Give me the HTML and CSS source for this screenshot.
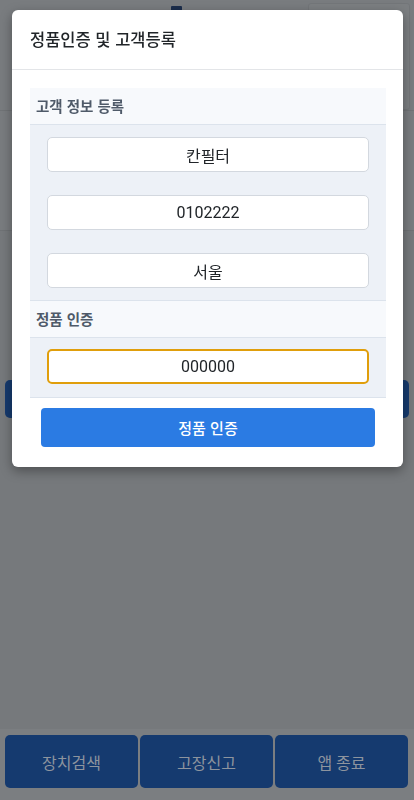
FILE: index.html
```html
<!DOCTYPE html>
<html lang="ko">
<head>
<meta charset="utf-8">
<title>정품인증 및 고객등록</title>
<link rel="stylesheet" href="styles.css">
</head>
<body>
<div class="page">
  <main class="main">
    <div class="top-card">
      <div class="top-row">
        <span class="top-icon"></span>
        <div class="top-box"></div>
      </div>
      <div class="top-row2"></div>
    </div>
    <div class="bg-bar"></div>
  </main>
  <footer class="footer">
    <button class="foot-btn">장치검색</button>
    <button class="foot-btn">고장신고</button>
    <button class="foot-btn">앱 종료</button>
  </footer>
</div>

<div class="modal">
  <div class="modal-header">정품인증 및 고객등록</div>
  <div class="modal-body">
    <div class="panel">
      <div class="panel-title">고객 정보 등록</div>
      <div class="panel-content">
        <input class="field" type="text" value="칸필터">
        <input class="field" type="text" value="0102222">
        <input class="field" type="text" value="서울">
      </div>
      <div class="panel-title panel-title-2">정품 인증</div>
      <div class="panel-content panel-content-2">
        <input class="field field-active" type="text" value="000000">
      </div>
    </div>
    <button class="submit">정품 인증</button>
  </div>
</div>
</body>
</html>
```

FILE: styles.css
```css
* { box-sizing: border-box; }
html, body { margin: 0; padding: 0; }
body {
  width: 414px;
  height: 800px;
  background: #76797c;
  font-family: Roboto, "Noto Sans CJK KR", sans-serif;
  overflow: hidden;
}
.page {
  height: 800px;
  display: flex;
  flex-direction: column;
}
.main {
  flex: 1;
  display: flex;
  flex-direction: column;
}
.top-card {
  height: 231px;
  border-bottom: 1px solid #6f7275;
  background: #797c7f;
  display: flex;
  flex-direction: column;
}
.top-row {
  height: 111px;
  border-bottom: 1px solid #707376;
  display: flex;
  justify-content: space-between;
  align-items: flex-start;
  padding: 3px 4px 0 171px;
}
.top-icon {
  width: 11px;
  height: 8px;
  margin-top: 3px;
  background: #1b2d4c;
  border-radius: 1px;
}
.top-box {
  width: 102px;
  height: 107px;
  background: #7c7f82;
  border: 1px solid #737679;
  border-radius: 3px;
}
.bg-bar {
  margin: 149px 5px 0 5px;
  height: 38px;
  background: #163a6e;
  border-radius: 5px;
}
.footer {
  height: 71px;
  background: #7b7e81;
  display: grid;
  grid-template-columns: repeat(3, 133px);
  gap: 2px;
  padding: 6px 6px 12px 5px;
}
.foot-btn {
  height: 53px;
  border: none;
  border-radius: 5px;
  background: #153a6f;
  color: #8d949e;
  font-family: Roboto, "Noto Sans CJK KR", sans-serif;
  font-size: 16px;
  padding: 0;
}

.modal {
  position: fixed;
  top: 10px;
  left: 12px;
  width: 391px;
  background: #ffffff;
  border-radius: 6px;
  box-shadow: 0 4px 12px rgba(0, 0, 0, 0.35);
  display: flex;
  flex-direction: column;
}
.modal-header {
  height: 60px;
  border-bottom: 1px solid #e3e5e8;
  display: flex;
  align-items: center;
  padding: 0 18px 1px 18px;
  font-family: "Noto Sans CJK KR", sans-serif;
  font-size: 16.5px;
  font-weight: 500;
  color: #212529;
}
.modal-body {
  display: flex;
  flex-direction: column;
  padding: 18px 17px 20px 18px;
}
.panel {
  display: flex;
  flex-direction: column;
  background: #edf1f7;
}
.panel-title {
  height: 37px;
  background: #f7f9fc;
  border-bottom: 1px solid #dce3ec;
  display: flex;
  align-items: center;
  padding: 0 6px 1px 6px;
  font-family: "Noto Sans CJK KR", sans-serif;
  font-size: 14.5px;
  font-weight: 700;
  color: #4f5a69;
}
.panel-title-2 {
  height: 38px;
  border-top: 1px solid #dce3ec;
}
.panel-content {
  display: flex;
  flex-direction: column;
  gap: 23px;
  padding: 12px 17px 12px 17px;
}
.panel-content-2 {
  padding: 11px 17px 13px 17px;
  border-bottom: 1px solid #dce3ec;
}
.field {
  height: 35px;
  width: 100%;
  border: 1px solid #d3d8df;
  border-radius: 5px;
  background: #ffffff;
  text-align: center;
  font-family: Roboto, "Noto Sans CJK KR", sans-serif;
  font-size: 16px;
  color: #212529;
  padding: 0 8px;
  outline: none;
}
.field-active {
  border: 2px solid #e09e0b;
}
.submit {
  margin: 10px 11px 0 11px;
  height: 39px;
  border: none;
  border-radius: 4px;
  background: #2b7be3;
  color: #ffffff;
  font-family: "Noto Sans CJK KR", sans-serif;
  font-size: 15px;
  font-weight: 500;
  padding: 0;
}
```
